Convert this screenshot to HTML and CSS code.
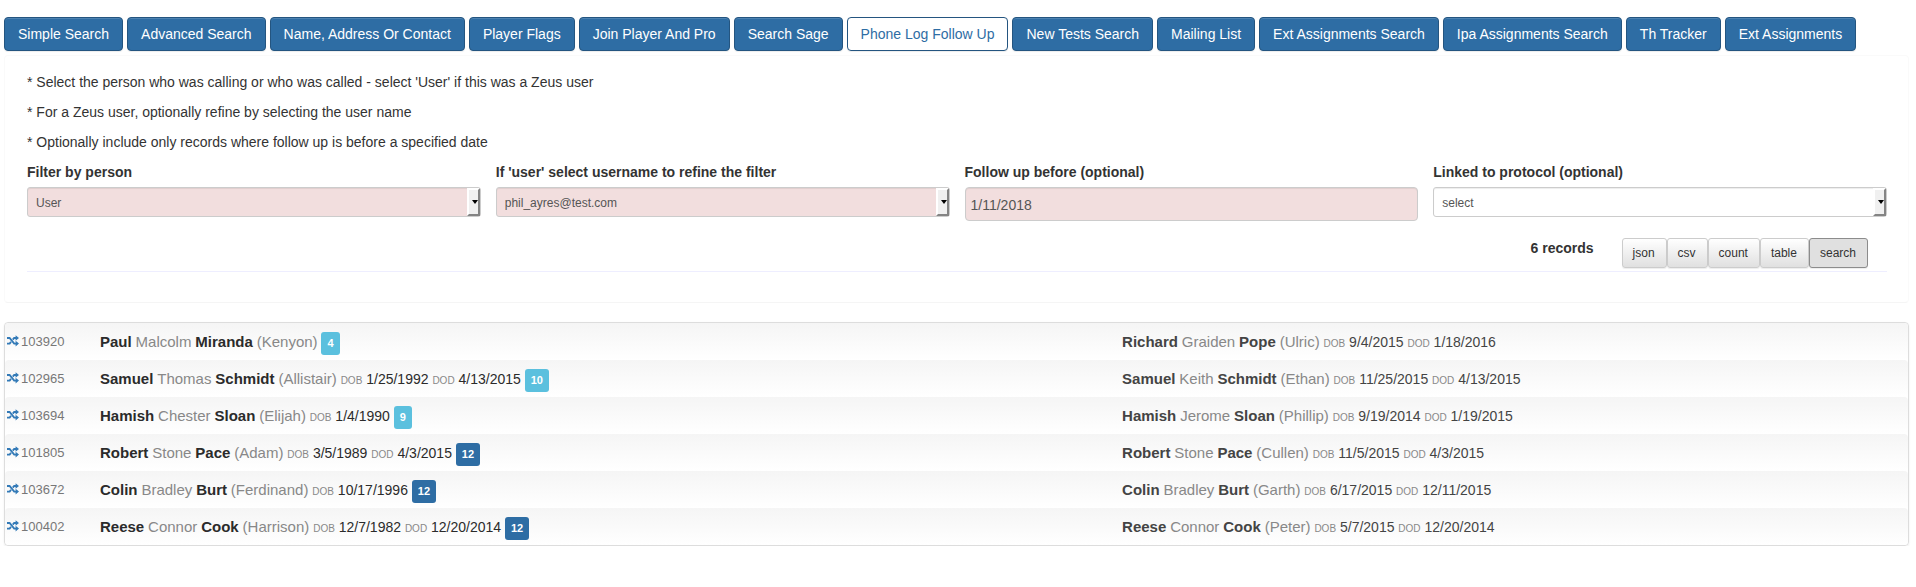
FILE: index.html
```html
<!DOCTYPE html>
<html lang="en">
<head>
<meta charset="utf-8">
<title>Phone Log Follow Up</title>
<link rel="stylesheet" href="styles.css">
</head>
<body>
<svg class="sprite" aria-hidden="true">
<symbol id="shuffle" viewBox="0 0 12 12">
<path d="M0 3H2.6L7.2 8.6H9.5M0 8.6H2.6L4 6.9M5.8 4.7L7.2 3H9.5" fill="none" stroke="currentColor" stroke-width="1.9"/>
<path d="M8.6 .2L12 3L8.6 5.8ZM8.6 5.8L12 8.6L8.6 11.4Z" fill="currentColor"/>
</symbol>
</svg>
<nav class="tabs" aria-label="Searches">
<a class="tab" href="#">Simple Search</a>
<a class="tab" href="#">Advanced Search</a>
<a class="tab" href="#">Name, Address Or Contact</a>
<a class="tab" href="#">Player Flags</a>
<a class="tab" href="#">Join Player And Pro</a>
<a class="tab" href="#">Search Sage</a>
<a class="tab tab-active" href="#" aria-current="page">Phone Log Follow Up</a>
<a class="tab" href="#">New Tests Search</a>
<a class="tab" href="#">Mailing List</a>
<a class="tab" href="#">Ext Assignments Search</a>
<a class="tab" href="#">Ipa Assignments Search</a>
<a class="tab" href="#">Th Tracker</a>
<a class="tab" href="#">Ext Assignments</a>
</nav>
<form class="panel">
<p class="hint">* Select the person who was calling or who was called - select 'User' if this was a Zeus user</p>
<p class="hint">* For a Zeus user, optionally refine by selecting the user name</p>
<p class="hint">* Optionally include only records where follow up is before a specified date</p>
<div class="filters">
<div class="field"><label for="person">Filter by person</label>
<div class="select-box"><select id="person" class="control filled"><option>User</option></select></div></div>
<div class="field"><label for="username">If 'user' select username to refine the filter</label>
<div class="select-box"><select id="username" class="control filled"><option>phil_ayres@test.com</option></select></div></div>
<div class="field"><label for="before">Follow up before (optional)</label>
<input id="before" class="control date filled" type="text" value="1/11/2018"></div>
<div class="field"><label for="protocol">Linked to protocol (optional)</label>
<div class="select-box"><select id="protocol" class="control"><option>select</option></select></div></div>
</div>
<div class="actions">
<strong class="count">6 records</strong>
<div class="buttons">
<button class="btn" type="button">json</button>
<button class="btn" type="button">csv</button>
<button class="btn" type="button">count</button>
<button class="btn" type="button">table</button>
<button class="btn btn-active" type="button">search</button>
</div>
</div>
</form>
<ul class="results">
<li class="row"><div class="left"><a class="id" href="#"><svg class="icon"><use href="#shuffle"/></svg>103920</a><div class="person"><b>Paul</b> <i>Malcolm</i> <b>Miranda</b> <i>(Kenyon)</i> <span class="badge">4</span></div></div><div class="right person"><b>Richard</b> <i>Graiden</i> <b>Pope</b> <i>(Ulric)</i> <small>DOB</small> 9/4/2015 <small>DOD</small> 1/18/2016</div></li>
<li class="row"><div class="left"><a class="id" href="#"><svg class="icon"><use href="#shuffle"/></svg>102965</a><div class="person"><b>Samuel</b> <i>Thomas</i> <b>Schmidt</b> <i>(Allistair)</i> <small>DOB</small> 1/25/1992 <small>DOD</small> 4/13/2015 <span class="badge">10</span></div></div><div class="right person"><b>Samuel</b> <i>Keith</i> <b>Schmidt</b> <i>(Ethan)</i> <small>DOB</small> 11/25/2015 <small>DOD</small> 4/13/2015</div></li>
<li class="row"><div class="left"><a class="id" href="#"><svg class="icon"><use href="#shuffle"/></svg>103694</a><div class="person"><b>Hamish</b> <i>Chester</i> <b>Sloan</b> <i>(Elijah)</i> <small>DOB</small> 1/4/1990 <span class="badge">9</span></div></div><div class="right person"><b>Hamish</b> <i>Jerome</i> <b>Sloan</b> <i>(Phillip)</i> <small>DOB</small> 9/19/2014 <small>DOD</small> 1/19/2015</div></li>
<li class="row"><div class="left"><a class="id" href="#"><svg class="icon"><use href="#shuffle"/></svg>101805</a><div class="person"><b>Robert</b> <i>Stone</i> <b>Pace</b> <i>(Adam)</i> <small>DOB</small> 3/5/1989 <small>DOD</small> 4/3/2015 <span class="badge badge-dark">12</span></div></div><div class="right person"><b>Robert</b> <i>Stone</i> <b>Pace</b> <i>(Cullen)</i> <small>DOB</small> 11/5/2015 <small>DOD</small> 4/3/2015</div></li>
<li class="row"><div class="left"><a class="id" href="#"><svg class="icon"><use href="#shuffle"/></svg>103672</a><div class="person"><b>Colin</b> <i>Bradley</i> <b>Burt</b> <i>(Ferdinand)</i> <small>DOB</small> 10/17/1996 <span class="badge badge-dark">12</span></div></div><div class="right person"><b>Colin</b> <i>Bradley</i> <b>Burt</b> <i>(Garth)</i> <small>DOB</small> 6/17/2015 <small>DOD</small> 12/11/2015</div></li>
<li class="row"><div class="left"><a class="id" href="#"><svg class="icon"><use href="#shuffle"/></svg>100402</a><div class="person"><b>Reese</b> <i>Connor</i> <b>Cook</b> <i>(Harrison)</i> <small>DOB</small> 12/7/1982 <small>DOD</small> 12/20/2014 <span class="badge badge-dark">12</span></div></div><div class="right person"><b>Reese</b> <i>Connor</i> <b>Cook</b> <i>(Peter)</i> <small>DOB</small> 5/7/2015 <small>DOD</small> 12/20/2014</div></li>
</ul>
</body>
</html>
```
FILE: styles.css
```css
* { box-sizing: border-box; }
body {
  margin: 0;
  padding: 17px 7px 0 4px;
  background: #fff;
  color: #333;
  font: 14px/20px "Liberation Sans", Arial, sans-serif;
}
.sprite { display: none; }
.tabs { display: flex; flex-wrap: wrap; gap: 4px; }
.tab {
  padding: 6px 13px;
  border: 1px solid #245580;
  border-radius: 4px;
  background: #2e6da4;
  color: #fff;
  text-decoration: none;
  box-shadow: inset 0 1px 0 rgba(255, 255, 255, .15), 0 1px 1px rgba(0, 0, 0, .075);
}
.tab-active { background: #fff; color: #2e6da4; }
.panel {
  margin: 4px 0 19px;
  padding: 16px 21px 30px 22px;
  border: 1px solid #fafafa;
  border-bottom-color: #f5f5f5;
  border-radius: 4px;
}
.hint { margin: 0 0 10px; }
.filters {
  display: grid;
  grid-template-columns: repeat(4, 1fr);
  gap: 15px;
  align-items: start;
}
.field { display: flex; flex-direction: column; gap: 5px; }
.field label { font-weight: bold; }
.control {
  display: block;
  width: 100%;
  height: 30px;
  padding: 2px 8px 0;
  border: 1px solid #ccc;
  border-radius: 3px;
  background: #fff;
  color: #555;
  font: 12px "Liberation Sans", Arial, sans-serif;
  box-shadow: inset 0 1px 1px rgba(0, 0, 0, .075);
  appearance: none;
}
.filled { background: #f2dede; }
.date { height: 34px; padding: 2px 5px 0; border-radius: 4px; font-size: 14px; }
.select-box { position: relative; }
.select-box::before {
  content: "";
  position: absolute;
  top: 1px;
  right: 1px;
  bottom: 1px;
  width: 9px;
  border: 2px solid;
  border-color: #fff #848484 #848484 #fff;
  background: #f0f0f0;
  pointer-events: none;
}
.select-box::after {
  content: "";
  position: absolute;
  top: 13px;
  right: 3px;
  border: 3px solid transparent;
  border-top: 4px solid #000;
  border-bottom: 0;
  pointer-events: none;
}
.actions {
  display: flex;
  justify-content: flex-end;
  gap: 28px;
  margin-top: 17px;
  padding: 0 19px 3px 0;
  border-bottom: 1px solid #eef;
}
.buttons { display: flex; }
.btn {
  height: 30px;
  padding: 0 11px 0 10px;
  border: 1px solid #ccc;
  border-radius: 3px;
  background: linear-gradient(#fff, #e0e0e0);
  color: #333;
  font: 12px "Liberation Sans", Arial, sans-serif;
  box-shadow: 0 1px 1px rgba(0, 0, 0, .075);
}
.btn-active { border-color: #8c8c8c; background: #e0e0e0; }
.results {
  margin: 0;
  padding: 0;
  list-style: none;
  border: 1px solid #ddd;
  border-radius: 4px;
  box-shadow: 0 1px 2px rgba(0, 0, 0, .075);
}
.row {
  display: grid;
  grid-template-columns: 7fr 5fr;
  height: 37px;
  background: linear-gradient(#f5f5f5, #fff);
  line-height: 38px;
  border-radius: 4px;
}
.left { display: flex; color: #2b2b2b; }
.right { padding-left: 7px; color: #444; }
.id {
  display: flex;
  gap: 2px;
  width: 95px;
  padding-left: 2px;
  color: #777;
  font-size: 13px;
  text-decoration: none;
}
.icon { width: 12px; height: 12px; margin-top: 12px; color: #337ab7; }
.person { font-size: 14px; white-space: nowrap; }
.person b { font-size: 15px; }
.person i { color: #888; font-size: 15px; font-style: normal; }
.person small { color: #888; font-size: 10px; }
.badge {
  display: inline-block;
  padding: 0 6px;
  border-radius: 3px;
  background: #5bc0de;
  color: #fff;
  font-size: 11px;
  font-weight: bold;
  line-height: 23px;
}
.badge-dark { background: #2e6da4; }
```
